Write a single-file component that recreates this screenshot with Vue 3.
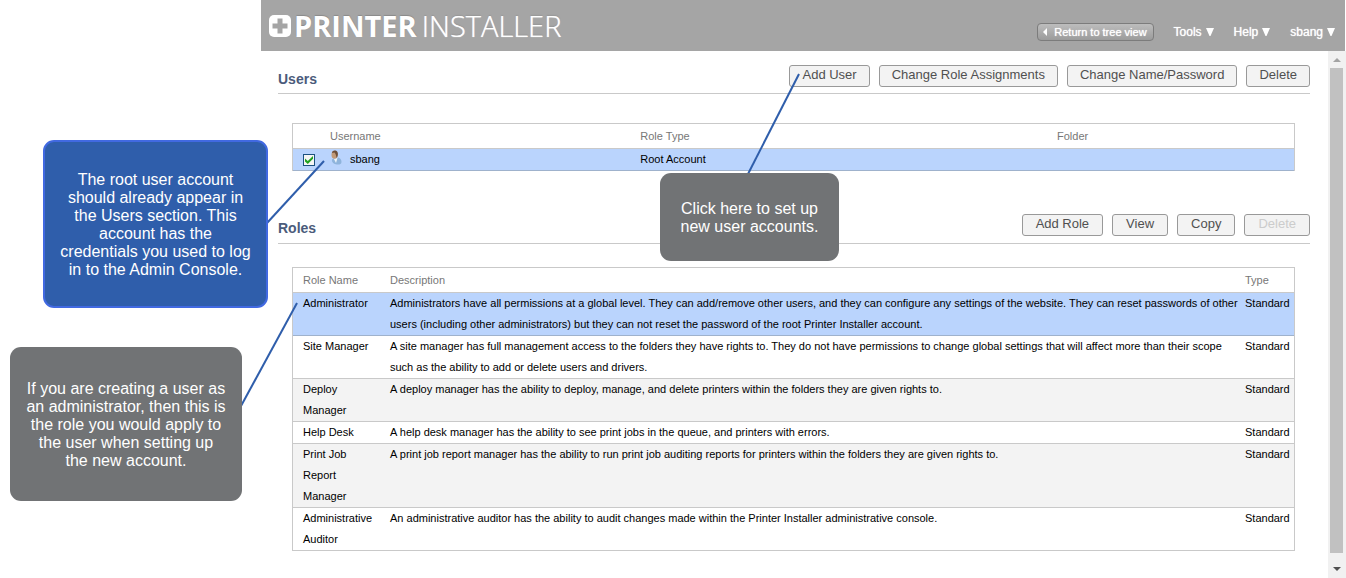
<script setup>
import { ref } from 'vue'

const selected = ref(true)

const menus = ['Tools', 'Help', 'sbang']
const userActions = ['Add User', 'Change Role Assignments', 'Change Name/Password', 'Delete']
const roleActions = [
  { label: 'Add Role', disabled: false },
  { label: 'View', disabled: false },
  { label: 'Copy', disabled: false },
  { label: 'Delete', disabled: true },
]
const roles = [
  {
    name: 'Administrator',
    text: 'Administrators have all permissions at a global level. They can add/remove other users, and they can configure any settings of the website. They can reset passwords of other users (including other administrators) but they can not reset the password of the root Printer Installer account.',
    state: 'selected',
  },
  {
    name: 'Site Manager',
    text: 'A site manager has full management access to the folders they have rights to. They do not have permissions to change global settings that will affect more than their scope such as the ability to add or delete users and drivers.',
    state: '',
  },
  {
    name: 'Deploy Manager',
    text: 'A deploy manager has the ability to deploy, manage, and delete printers within the folders they are given rights to.',
    state: 'shaded',
  },
  {
    name: 'Help Desk',
    text: 'A help desk manager has the ability to see print jobs in the queue, and printers with errors.',
    state: '',
  },
  {
    name: 'Print Job Report Manager',
    text: 'A print job report manager has the ability to run print job auditing reports for printers within the folders they are given rights to.',
    state: 'shaded',
  },
  {
    name: 'Administrative Auditor',
    text: 'An administrative auditor has the ability to audit changes made within the Printer Installer administrative console.',
    state: '',
  },
]
</script>

<template>
  <div class="page">
    <div class="app">
      <header class="topbar">
        <div class="brand">
          <svg class="logo" viewBox="0 0 22 22" aria-hidden="true">
            <rect width="22" height="22" rx="5" fill="#fff" />
            <path d="M8.500 3.500h5v5h5v5h-5v5h-5v-5h-5v-5h5z" fill="#a5a5a5" />
          </svg>
          <span class="bold">PRINTER</span><span class="light">INSTALLER</span>
        </div>
        <nav class="nav">
          <button class="return" type="button">
            <svg viewBox="0 0 4 8" aria-hidden="true"><path d="M4 0v8L0 4z" fill="#fff" /></svg>
            Return to tree view
          </button>
          <button v-for="m in menus" :key="m" class="menu" type="button">
            {{ m }}
            <svg viewBox="0 0 8 8" aria-hidden="true"><path d="M0 0h8L4.500 8h-1z" fill="#fff" /></svg>
          </button>
        </nav>
      </header>

      <div class="body">
        <main class="content">
          <section>
            <div class="section-head">
              <h2>Users</h2>
              <div class="actions">
                <button v-for="a in userActions" :key="a" class="btn" type="button">{{ a }}</button>
              </div>
            </div>
            <table class="users">
              <colgroup>
                <col class="c-check" /><col class="c-user" /><col /><col class="c-folder" />
              </colgroup>
              <thead>
                <tr><th></th><th>Username</th><th>Role Type</th><th>Folder</th></tr>
              </thead>
              <tbody>
                <tr class="selected">
                  <td><input v-model="selected" type="checkbox" aria-label="Select sbang" /></td>
                  <td>
                    <span class="user">
                      <svg viewBox="0 0 12 15" aria-hidden="true">
                        <path d="M2 9.500C3.500 8 4.500 8.500 6 9l2-1.500c2 .5 3.500 2 3.500 4.500 0 2-2 2.800-4.500 2.500C4 14.200 1.500 12.500 2 9.500z" fill="#8fb4dc" />
                        <path d="M4 9l2 4 1.500-5z" fill="#eef5fb" />
                        <ellipse cx="4.500" cy="4.800" rx="3" ry="4" fill="#c29a78" />
                        <path d="M2 3C2.500 0 6 0 7.500 2c.8 2 .3 4-.7 6C6 6 6 4 4.500 2.500z" fill="#6b4e3a" />
                      </svg>
                      sbang
                    </span>
                  </td>
                  <td>Root Account</td>
                  <td></td>
                </tr>
              </tbody>
            </table>
          </section>

          <section class="roles-section">
            <div class="section-head">
              <h2>Roles</h2>
              <div class="actions">
                <button v-for="a in roleActions" :key="a.label" class="btn" type="button" :disabled="a.disabled">{{ a.label }}</button>
              </div>
            </div>
            <table class="roles">
              <colgroup>
                <col class="c-name" /><col /><col class="c-type" />
              </colgroup>
              <thead>
                <tr><th>Role Name</th><th>Description</th><th>Type</th></tr>
              </thead>
              <tbody>
                <tr v-for="r in roles" :key="r.name" :class="r.state">
                  <td>{{ r.name }}</td>
                  <td>{{ r.text }}</td>
                  <td>Standard</td>
                </tr>
              </tbody>
            </table>
          </section>
        </main>

        <div class="scrollbar" aria-hidden="true">
          <svg viewBox="0 0 8 4"><path d="M0 4l4-4 4 4z" fill="#a3a3a3" /></svg>
          <div class="thumb"></div>
          <svg viewBox="0 0 8 4"><path d="M0 0h8L4 4z" fill="#505050" /></svg>
        </div>
      </div>
    </div>

    <svg class="connectors" width="860" height="578" aria-hidden="true">
      <g stroke="#2f5eab" stroke-width="2">
        <path d="M267 223L324 161" />
        <path d="M241 406L297 303" />
        <path d="M748 174L799 74" />
      </g>
    </svg>
    <aside class="callout root-note">The root user account should already appear in the Users section. This account has the credentials you used to log in to the Admin Console.</aside>
    <aside class="callout role-note">If you are creating a user as an administrator, then this is the role you would apply to the user when setting up the new account.</aside>
    <aside class="callout add-note">Click here to set up new user accounts.</aside>
  </div>
</template>

<style>
body {
  margin: 0;
  background: #fff;
}
</style>

<style scoped>
.page {
  position: relative;
  display: flex;
  min-height: 100vh;
  padding-left: 261px;
  box-sizing: border-box;
  overflow: hidden;
  font-family: "Liberation Sans", Arial, sans-serif;
  font-size: 11px;
  color: #000;
}
.app {
  flex: 1;
  min-width: 0;
  display: flex;
  flex-direction: column;
}
button {
  font-family: inherit;
  cursor: pointer;
}
.topbar {
  display: flex;
  justify-content: space-between;
  align-items: center;
  height: 51px;
  margin-right: 1px;
  padding: 0 10px 0 8px;
  box-sizing: border-box;
  background: #a5a5a5;
}
.brand {
  display: flex;
  align-items: center;
  color: #fff;
  font-family: "Open Sans", "Noto Sans", sans-serif;
  font-size: 29px;
  line-height: 51px;
  text-shadow: 0 -1px 1px #8a8a8a;
}
.logo {
  width: 22px;
  height: 22px;
  margin-right: 3px;
}
.bold {
  font-weight: 700;
}
.light {
  font-weight: 300;
  margin-left: 5px;
  text-shadow: 0 0 1px #fff, 0 -1px 1px #8a8a8a;
}
.nav {
  display: flex;
  align-items: center;
  gap: 20px;
  padding-top: 13px;
}
.return {
  display: flex;
  align-items: center;
  gap: 7px;
  height: 18px;
  padding: 0 6px 0 5px;
  border: 1px solid #7c7c7c;
  border-radius: 4px;
  background: linear-gradient(#bdbdbd, #9b9b9b);
  color: #fff;
  font-size: 11px;
  white-space: nowrap;
  text-shadow: 0 0 1px #fff;
}
.return svg {
  width: 4px;
  height: 8px;
}
.menu {
  display: flex;
  align-items: center;
  gap: 4px;
  padding: 0;
  border: 0;
  background: none;
  color: #fff;
  font-size: 12px;
  line-height: 18px;
  text-shadow: 0 0 1px #fff;
}
.menu svg {
  width: 8px;
  height: 8px;
}
.body {
  flex: 1;
  display: flex;
}
.content {
  flex: 1;
  min-width: 0;
  padding: 14px 18px 0 17px;
}
.section-head {
  display: flex;
  justify-content: space-between;
  height: 28px;
  border-bottom: 1px solid #c9c9c9;
}
h2 {
  margin: 0;
  color: #4b5b7b;
  font-size: 14px;
  line-height: 28px;
}
.actions {
  display: flex;
  gap: 9px;
}
.btn {
  height: 22px;
  padding: 0 12px 2px;
  border: 1px solid #999;
  border-radius: 3px;
  background: #f3f3f3;
  color: #505050;
  font-size: 13px;
  line-height: 18px;
  white-space: nowrap;
}
.btn:disabled {
  color: #ccc;
}
.roles-section {
  margin-top: 43px;
}
.roles-section .section-head {
  height: 29px;
}
.roles-section .btn {
  padding: 0 13px 2px;
}
table {
  width: calc(100% - 29px);
  margin: 29px 15px 0 14px;
  table-layout: fixed;
  border: 1px solid #c9c9c9;
  border-bottom: 0;
  border-collapse: separate;
  border-spacing: 0;
  line-height: 21px;
}
.roles {
  margin-top: 23px;
}
th,
td {
  padding: 0 8px 0 10px;
  border-bottom: 1px solid #c9c9c9;
  text-align: left;
  vertical-align: top;
}
th {
  height: 24px;
  line-height: 24px;
  color: #777;
  font-weight: 400;
}
.c-check {
  width: 27px;
}
.c-user {
  width: 31%;
}
.c-folder {
  width: 247px;
}
.c-name {
  width: 87px;
}
.c-type {
  width: 53px;
}
.users td:first-child {
  padding-right: 0;
}
.roles td:nth-child(2) {
  padding-right: 0;
}
.roles th:last-child,
.roles td:last-child {
  padding: 0 4px;
}
.selected {
  background: #bad4fd;
}
.selected td {
  border-bottom-color: #9fb2cc;
}
.shaded {
  background: #f3f3f3;
}
.user {
  display: flex;
  align-items: center;
  gap: 8px;
  height: 21px;
}
.user svg {
  width: 12px;
  height: 15px;
  margin-bottom: 4px;
}
input[type="checkbox"] {
  appearance: none;
  display: grid;
  place-items: center;
  width: 12px;
  height: 12px;
  margin: 5px 0 0;
  border: 1px solid #1c5180;
  background: #f6f6f4;
}
input:checked::before {
  content: "";
  width: 8px;
  height: 8px;
  background: #21a121;
  clip-path: polygon(0 30%, 35% 62%, 100% 0, 100% 35%, 35% 100%, 0 68%);
}
.scrollbar {
  display: flex;
  flex-direction: column;
  align-items: center;
  width: 18px;
  padding: 7px 1px 7px 0;
  box-sizing: border-box;
  background: #f1f1f1;
}
.scrollbar svg {
  width: 8px;
  height: 4px;
}
.thumb {
  flex: 1;
  width: 13px;
  margin: 6px 0 14px;
  background: #c1c1c1;
}
.connectors {
  position: absolute;
  left: 0;
  top: 0;
  pointer-events: none;
}
.callout {
  position: absolute;
  display: flex;
  align-items: center;
  box-sizing: border-box;
  border-radius: 11px;
  background: #717375;
  color: #fff;
  font-size: 16px;
  line-height: 18px;
  text-align: center;
}
.root-note {
  left: 43px;
  top: 140px;
  width: 225px;
  height: 168px;
  padding: 2px 14px 0;
  border: 2px solid #4169e1;
  background: #2f5eab;
}
.role-note {
  left: 10px;
  top: 347px;
  width: 232px;
  height: 154px;
  padding: 2px 16px 0;
}
.add-note {
  left: 660px;
  top: 173px;
  width: 179px;
  height: 88px;
  padding: 2px 16px 0;
}
</style>
